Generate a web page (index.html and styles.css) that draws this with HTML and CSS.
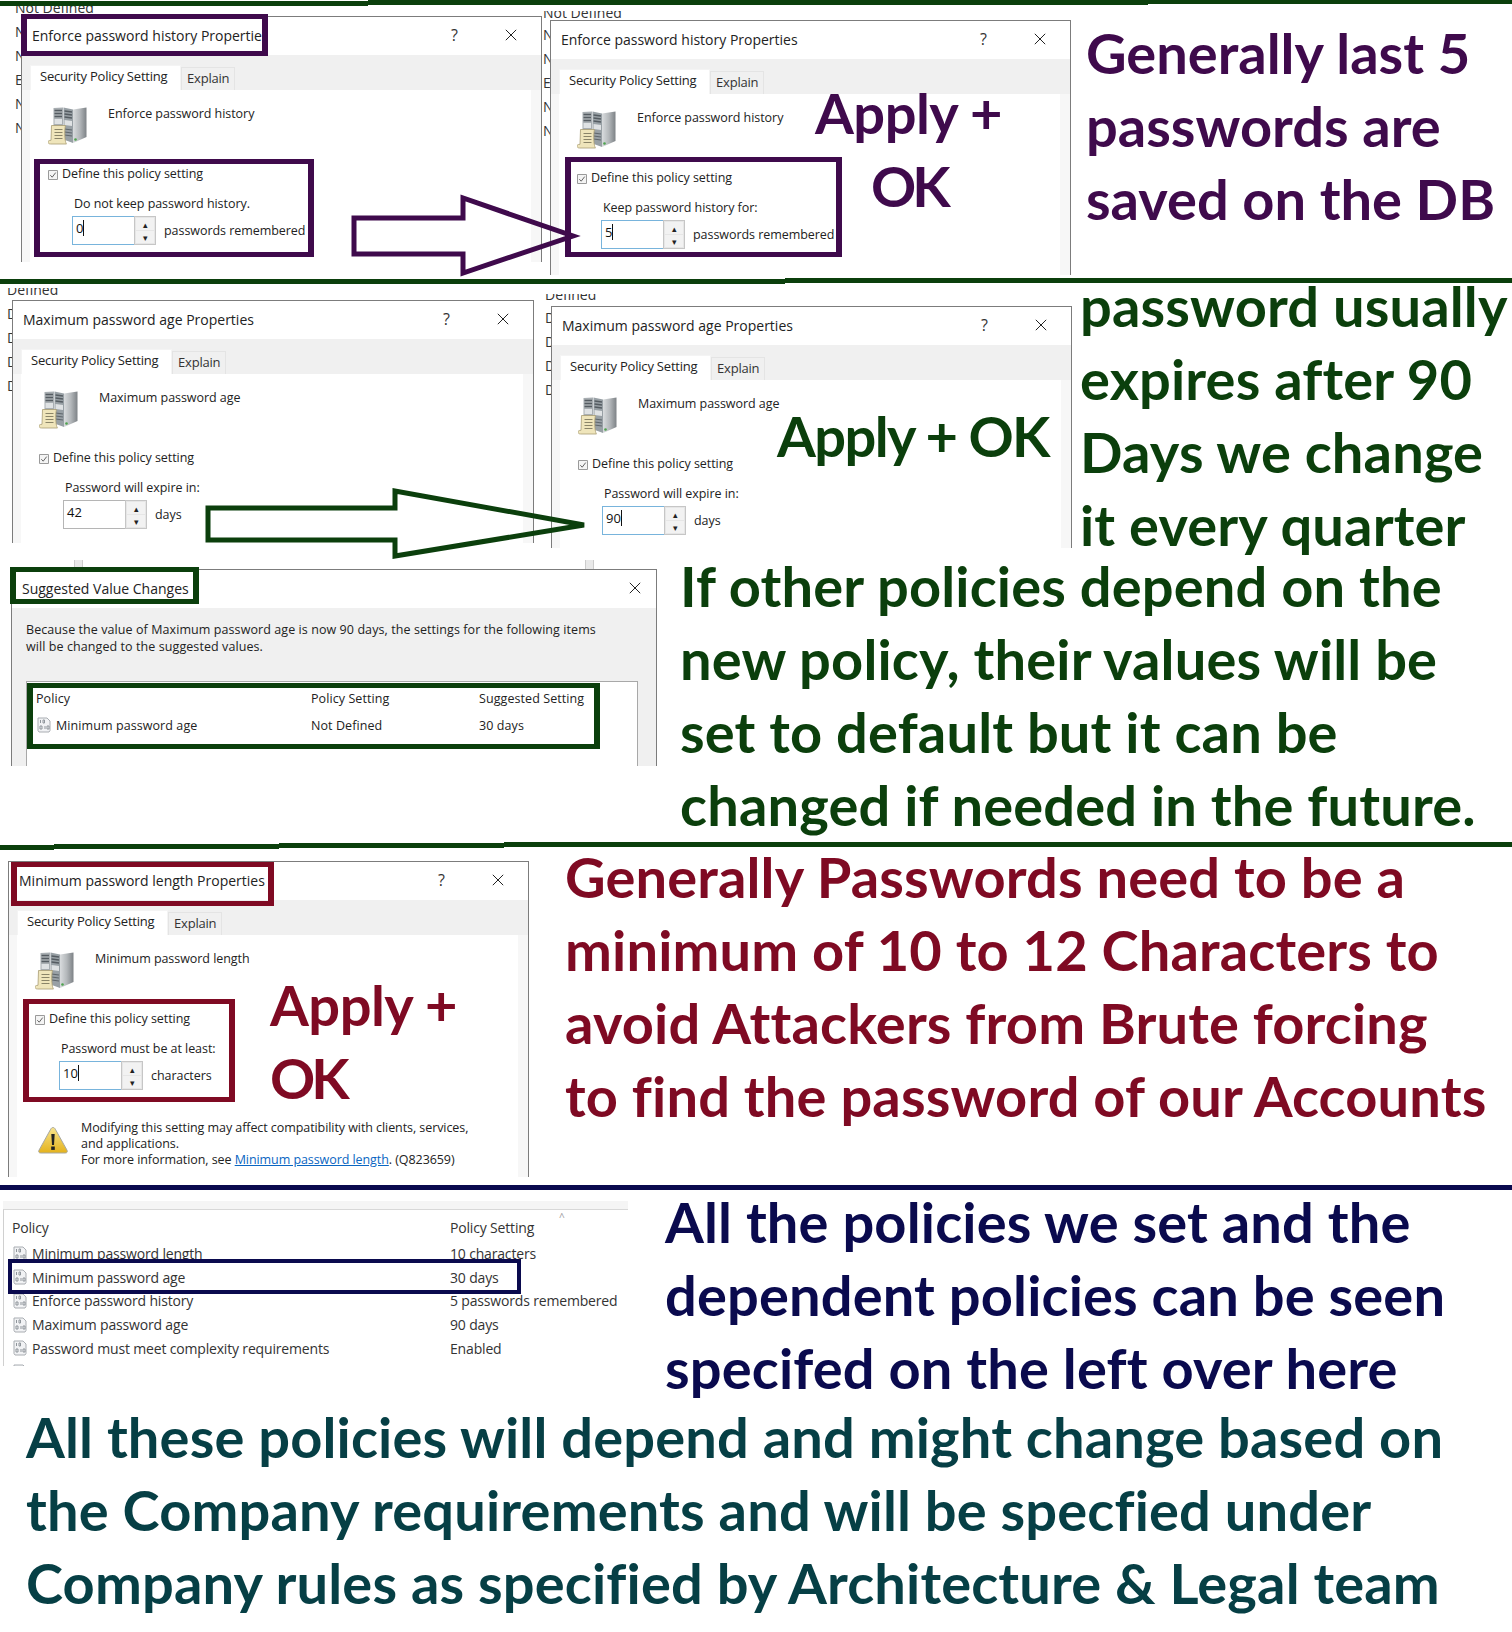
FILE: index.html
```html
<!DOCTYPE html>
<html lang="en">
<head>
<meta charset="utf-8">
<title>Password policy walkthrough</title>
<link rel="stylesheet" href="styles.css">
</head>
<body>
<svg class="defs" width="0" height="0" aria-hidden="true">
  <defs>
    <linearGradient id="srv" x1="0" x2="1" y1="0" y2="0"><stop offset="0" stop-color="#d9dcde"/><stop offset=".5" stop-color="#b4b8bb"/><stop offset="1" stop-color="#7d8286"/></linearGradient>
    <linearGradient id="warn" x1="0" x2="0" y1="0" y2="1"><stop offset="0" stop-color="#f7e38c"/><stop offset="1" stop-color="#e4b21c"/></linearGradient>
    <symbol id="i-server" viewBox="0 0 40 40">
      <path d="M25 3.500L38.500 1.500V31L25 37z" fill="url(#srv)"/>
      <path d="M5.500 2l9.500-.5V33L5.500 31z" fill="#a8aeb2"/>
      <path d="M15.500 1.500L25 3.500V37l-9.500-3.500z" fill="#98a0a5"/>
      <path d="M6.500 4.500h7.500M6.500 7.500h7.500M6.500 10.500h7.500M16.500 5l7.500 1M16.500 8l7.500 1M16.500 11l7.500 1" stroke="#555c62" stroke-width="1.300"/>
      <path d="M6.500 13h7.500v5H6.500zM16.500 14l7.500 1v5l-7.500-1z" fill="#dfe2e4"/>
      <path d="M16.500 23l7.500 1M16.500 26l7.500 1M16.500 29l7.500 1" stroke="#5f666c" stroke-width="1.100"/>
      <circle cx="27.500" cy="33.500" r="1.300" fill="#4da34d"/>
      <path d="M3.500 19.500h14c-1 3-1 12 0 16 .3 1.500 1 2.500 1 2.500H2.500C1 38 0 37.200 0 36c0-1 1-1.700 3-1.700z" fill="#efe5bb" stroke="#a89c72" stroke-width=".8"/>
      <path d="M6.500 23.500h8M6.500 26.500h8M6.500 29.500h8M6.500 32.500h8" stroke="#8a8468" stroke-width="1"/>
    </symbol>
    <symbol id="i-doc" viewBox="0 0 16 16">
      <path d="M2 1h9l3 3v9.500l-1 1.500H3l-1-1.500z" fill="#f1f2f4" stroke="#a9adb2" stroke-width="1"/>
      <path d="M4.500 3v3M7 3h1.500v3H7zM4 9h2v3H4zM9 9v3M11 9h2v3h-2z" fill="none" stroke="#8f959b" stroke-width="1"/>
    </symbol>
    <symbol id="i-warn" viewBox="0 0 30 28">
      <path d="M15 1.500c1 0 1.700.6 2.300 1.700l11.700 21c.8 1.500.1 2.800-1.600 2.800H2.600c-1.700 0-2.400-1.300-1.600-2.800l11.700-21c.6-1.100 1.300-1.700 2.300-1.700z" fill="url(#warn)" stroke="#a8a8a0" stroke-width="1"/>
      <path d="M13.300 8h3.400l-.7 11h-2z" fill="#222"/>
      <rect x="13.200" y="20.500" width="3.600" height="3.400" fill="#222"/>
    </symbol>
    <symbol id="i-x" viewBox="0 0 12 12"><path d="M.8.8l10.400 10.400M11.200.8L.8 11.200" stroke="#222" stroke-width="1" fill="none"/></symbol>
    <symbol id="i-check" viewBox="0 0 10 10"><path d="M.5.500h9v9h-9z" fill="#f4f4f4" stroke="#9a9a9a"/><path d="M2.300 5.200l1.900 2 3.500-4.600" fill="none" stroke="#555" stroke-width=".9"/></symbol>
  </defs>
</svg>

<main class="collage">

  <section class="band band-one">
    <div class="rule rule-one">
      <i class="seg seg-a"></i><i class="seg seg-b"></i><i class="seg seg-c"></i>
    </div>
    <div class="band-grid grid-one">
      <div class="stage">
        <div class="behind behind-a"><p class="clip-word">Not Defined</p><p>N</p><p>N</p><p>E</p><p>N</p><p>N</p></div>
        <div class="behind behind-b"><p class="clip-word">Not Defined</p><p>N</p><p>N</p><p>E</p><p>N</p><p>N</p></div>

        <article class="dialog d1">
          <header class="titlebar"><h2>Enforce password history Properties</h2><span class="help">?</span><svg class="close"><use href="#i-x"/></svg></header>
          <div class="tabs"><span class="tab active">Security Policy Setting</span><span class="tab">Explain</span></div>
          <div class="panel">
            <div class="policy-head"><svg class="srv"><use href="#i-server"/></svg><span>Enforce password history</span></div>
            <label class="define"><svg class="chk"><use href="#i-check"/></svg>Define this policy setting</label>
            <div class="field">
              <p class="field-label">Do not keep password history.</p>
              <div class="spin-row"><div class="spin focus"><b>0</b><em class="caret"></em></div><div class="arrows"><s>▴</s><s>▾</s></div><span>passwords remembered</span></div>
            </div>
          </div>
        </article>

        <article class="dialog d2">
          <header class="titlebar"><h2>Enforce password history Properties</h2><span class="help">?</span><svg class="close"><use href="#i-x"/></svg></header>
          <div class="tabs"><span class="tab active">Security Policy Setting</span><span class="tab">Explain</span></div>
          <div class="panel">
            <div class="policy-head"><svg class="srv"><use href="#i-server"/></svg><span>Enforce password history</span></div>
            <label class="define"><svg class="chk"><use href="#i-check"/></svg>Define this policy setting</label>
            <div class="field">
              <p class="field-label">Keep password history for:</p>
              <div class="spin-row"><div class="spin focus"><b>5</b><em class="caret"></em></div><div class="arrows"><s>▴</s><s>▾</s></div><span>passwords remembered</span></div>
            </div>
          </div>
        </article>

        <i class="mark purple h1a"></i>
        <i class="mark purple h1b"></i>
        <i class="mark purple h1c"></i>
        <svg class="arrow arrow-one" viewBox="0 0 230 80"><path d="M3 23H112V3L222 41 112 78V59H3z"/></svg>
        <strong class="call purple-text call-1a">Apply +</strong>
        <strong class="call call-ok purple-text call-1b">OK</strong>
      </div>
      <div class="note purple-text note-one">Generally last 5<br>passwords are<br>saved on the DB</div>
    </div>
  </section>

  <section class="band band-two">
    <div class="rule rule-two"><i class="seg seg-left"></i><i class="seg seg-right"></i></div>
    <div class="band-grid grid-two">
      <div class="stage">
        <div class="behind behind-c"><p class="clip-word">Defined</p><p>D</p><p>D</p><p>D</p><p>D</p></div>
        <div class="behind behind-d"><p class="clip-word">Defined</p><p>D</p><p>D</p><p>D</p><p>D</p></div>

        <article class="dialog d3">
          <header class="titlebar"><h2>Maximum password age Properties</h2><span class="help">?</span><svg class="close"><use href="#i-x"/></svg></header>
          <div class="tabs"><span class="tab active">Security Policy Setting</span><span class="tab">Explain</span></div>
          <div class="panel">
            <div class="policy-head"><svg class="srv"><use href="#i-server"/></svg><span>Maximum password age</span></div>
            <label class="define"><svg class="chk"><use href="#i-check"/></svg>Define this policy setting</label>
            <div class="field">
              <p class="field-label">Password will expire in:</p>
              <div class="spin-row"><div class="spin"><b>42</b></div><div class="arrows"><s>▴</s><s>▾</s></div><span>days</span></div>
            </div>
          </div>
        </article>

        <article class="dialog d4">
          <header class="titlebar"><h2>Maximum password age Properties</h2><span class="help">?</span><svg class="close"><use href="#i-x"/></svg></header>
          <div class="tabs"><span class="tab active">Security Policy Setting</span><span class="tab">Explain</span></div>
          <div class="panel">
            <div class="policy-head"><svg class="srv"><use href="#i-server"/></svg><span>Maximum password age</span></div>
            <label class="define"><svg class="chk"><use href="#i-check"/></svg>Define this policy setting</label>
            <div class="field">
              <p class="field-label">Password will expire in:</p>
              <div class="spin-row"><div class="spin focus"><b>90</b><em class="caret"></em></div><div class="arrows"><s>▴</s><s>▾</s></div><span>days</span></div>
            </div>
          </div>
        </article>

        <svg class="arrow arrow-two" viewBox="0 0 384 72"><path d="M3 20H190V3L379 37 190 68V52H3z"/></svg>
        <strong class="call green-text call-2a">Apply + OK</strong>

        <div class="sliver sliver-a"></div>
        <div class="sliver sliver-b"></div>

        <article class="dialog d5">
          <header class="titlebar short"><h2>Suggested Value Changes</h2><svg class="close"><use href="#i-x"/></svg></header>
          <div class="suggest-body">
            <p>Because the value of Maximum password age is now 90 days, the settings for the following items<br>will be changed to the suggested values.</p>
            <div class="list-box">
              <div class="sv-row sv-head"><span>Policy</span><span>Policy Setting</span><span>Suggested Setting</span></div>
              <div class="sv-row"><span class="with-icon"><svg class="doc"><use href="#i-doc"/></svg>Minimum password age</span><span>Not Defined</span><span>30 days</span></div>
            </div>
          </div>
        </article>

        <i class="mark green h2a"></i>
        <i class="mark green h2b"></i>
      </div>
      <div class="notes-col">
        <div class="note green-text note-two">password usually<br>expires after 90<br>Days we change<br>it every quarter</div>
        <div class="note green-text note-three">If other policies depend on the<br>new policy, their values will be<br>set to default but it can be<br>changed if needed in the future.</div>
      </div>
    </div>
  </section>

  <section class="band band-three">
    <div class="rule rule-three">
      <i class="seg s3a"></i><i class="seg s3b"></i><i class="seg s3c"></i><i class="seg s3d"></i>
    </div>
    <div class="band-grid grid-three">
      <div class="stage">
        <article class="dialog d6">
          <header class="titlebar"><h2>Minimum password length Properties</h2><span class="help">?</span><svg class="close"><use href="#i-x"/></svg></header>
          <div class="tabs"><span class="tab active">Security Policy Setting</span><span class="tab">Explain</span></div>
          <div class="panel">
            <div class="policy-head"><svg class="srv"><use href="#i-server"/></svg><span>Minimum password length</span></div>
            <label class="define"><svg class="chk"><use href="#i-check"/></svg>Define this policy setting</label>
            <div class="field">
              <p class="field-label">Password must be at least:</p>
              <div class="spin-row"><div class="spin focus"><b>10</b><em class="caret"></em></div><div class="arrows"><s>▴</s><s>▾</s></div><span>characters</span></div>
            </div>
            <div class="warning"><svg class="warn-icon"><use href="#i-warn"/></svg><p>Modifying this setting may affect compatibility with clients, services,<br>and applications.<br>For more information, see <a href="#q">Minimum password length</a>. (Q823659)</p></div>
          </div>
        </article>
        <i class="mark red h3a"></i>
        <i class="mark red h3b"></i>
        <strong class="call red-text call-3a">Apply +</strong>
        <strong class="call call-ok red-text call-3b">OK</strong>
      </div>
      <div class="note red-text note-four">Generally Passwords need to be a<br>minimum of 10 to 12 Characters to<br>avoid Attackers from Brute forcing<br>to find the password of our Accounts</div>
    </div>
  </section>

  <section class="band band-four">
    <div class="rule rule-four"><i class="seg seg-full"></i></div>
    <div class="band-grid grid-four">
      <div class="stage">
        <div class="policy-list">
          <div class="pl-row pl-head"><span>Policy</span><span>Policy Setting</span></div>
          <div class="pl-row"><span class="with-icon"><svg class="doc"><use href="#i-doc"/></svg>Minimum password length</span><span>10 characters</span></div>
          <div class="pl-row"><span class="with-icon"><svg class="doc"><use href="#i-doc"/></svg>Minimum password age</span><span>30 days</span></div>
          <div class="pl-row"><span class="with-icon"><svg class="doc"><use href="#i-doc"/></svg>Enforce password history</span><span>5 passwords remembered</span></div>
          <div class="pl-row"><span class="with-icon"><svg class="doc"><use href="#i-doc"/></svg>Maximum password age</span><span>90 days</span></div>
          <div class="pl-row"><span class="with-icon"><svg class="doc"><use href="#i-doc"/></svg>Password must meet complexity requirements</span><span>Enabled</span></div>
          <div class="pl-row"><span class="with-icon"><svg class="doc"><use href="#i-doc"/></svg></span></div>
          <span class="sort-caret">^</span>
        </div>
        <i class="mark navy h4a"></i>
      </div>
      <div class="note navy-text note-five">All the policies we set and the<br>dependent policies can be seen<br>specifed on the left over here</div>
    </div>
    <div class="note teal-text note-six">All these policies will depend and might change based on<br>the Company requirements and will be specfied under<br>Company rules as specified by Architecture &amp; Legal team</div>
  </section>

</main>
</body>
</html>
```

FILE: styles.css
```css
* { box-sizing: border-box; }
html, body { margin: 0; background: #fff; }
.defs { display: block; height: 0; }
.collage {
  width: 1512px;
  height: 1632px;
  overflow: hidden;
  font-family: "Open Sans", "Liberation Sans", sans-serif;
  color: #1a1a1a;
}

/* bands and rules */
.band-one { height: 278px; }
.band-two { height: 565px; }
.band-three { height: 342px; }
.band-four { height: 447px; }

.rule { display: flex; align-items: flex-start; height: 7px; position: relative; z-index: 5; }
.seg { display: block; height: 5px; background: #0b3f0c; }
.rule-one { margin-bottom: -7px; }
.seg-a { width: 368px; margin-top: 1px; }
.seg-b { width: 780px; }
.seg-c { flex: 1; height: 4px; }
.rule-two { height: 8px; }
.seg-left { width: 785px; margin-top: 1px; }
.seg-right { flex: 1; }
.s3a { width: 54px; margin-top: 2px; }
.s3b { width: 225px; margin-top: 1px; }
.s3c { width: 225px; }
.s3d { flex: 1; margin-top: -1px; }
.seg-full { width: 100%; background: #0a0a4e; }

.band-grid { display: grid; align-items: start; }
.grid-one { grid-template-columns: 1086px 1fr; height: 271px; }
.grid-two { grid-template-columns: 680px 1fr; height: 557px; }
.grid-three { grid-template-columns: 565px 1fr; height: 335px; }
.grid-four { grid-template-columns: 665px 1fr; height: 202px; }

.stage { position: relative; height: 100%; }

/* annotation text */
.note, .call {
  font-family: Lato, "Open Sans", sans-serif;
  font-weight: 700;
  font-size: 56px;
  line-height: 73px;
  font-variant-ligatures: none;
  white-space: nowrap;
}
.note { letter-spacing: .15px; }
.note-one { padding-top: 16px; letter-spacing: 0; }
.note-two { margin: -17px 0 0 400px; }
.note-three { margin-top: -12px; }
.note-four { margin-top: -10px; }
.note-five { margin-top: -7px; }
.note-six { padding: 6px 0 0 26px; }
.purple-text { color: #3f0a4c; }
.green-text { color: #0b3f0c; }
.red-text { color: #7f0a23; }
.navy-text { color: #0a0a4e; }
.teal-text { color: #063f45; }
.call { position: absolute; letter-spacing: -.5px; }
.call-ok { letter-spacing: -4px; }

/* items behind the dialogs */
.behind { position: absolute; font-size: 14px; color: #333; overflow: hidden; }
.behind p { margin: 0; height: 24px; line-height: 24px; white-space: nowrap; }
.behind-a { left: 15px; top: -4px; width: 80px; height: 140px; }
.behind-b { left: 543px; top: 11px; width: 80px; height: 140px; }
.behind-b .clip-word { margin-top: -10px; height: 22px; }
.behind-c { left: 7px; top: 2px; width: 80px; height: 120px; }
.behind-c .clip-word { margin-top: -10px; }
.behind-d { left: 545px; top: 8px; width: 80px; height: 120px; }
.behind-d .clip-word { margin-top: -11px; height: 23px; }

/* dialog */
.dialog {
  position: absolute;
  background: #fff;
  border: 1px solid #7c7c7c;
  border-bottom: 0;
  overflow: hidden;
  font-size: 12.5px;
  letter-spacing: -.05px;
}
.d1 { left: 21px; top: 16px; width: 521px; height: 246px; }
.d2 { left: 550px; top: 20px; width: 521px; height: 255px; }
.d3 { left: 12px; top: 14px; width: 522px; height: 243px; }
.d4 { left: 551px; top: 20px; width: 521px; height: 242px; }
.d5 { left: 11px; top: 283px; width: 646px; height: 197px; }
.d6 { left: 8px; top: 11px; width: 521px; height: 316px; }

.titlebar { display: flex; align-items: center; height: 38px; padding: 0 24px 2px 10px; background: #fff; }
.titlebar h2 { flex: 1; margin: 0; font-size: 14px; font-weight: 400; letter-spacing: 0; color: #222; white-space: nowrap; }
.d1 .titlebar h2 { clip-path: inset(0 188px 0 0); }
.help { width: 54px; font-size: 16px; color: #333; }
.close { width: 12px; height: 12px; }
.tabs { display: flex; align-items: flex-end; height: 35px; padding-left: 8px; background: #f0f0f0; }
.tab { display: flex; align-items: center; height: 23px; padding: 0 5px 2px; background: #f0f0f0; border: 1px solid #e4e4e4; border-bottom: 0; font-size: 13px; letter-spacing: -.2px; color: #333; }
.tab.active { height: 25px; width: 151px; padding: 0 9px 5px; background: #fff; border-color: #f4f4f4; color: #222; white-space: nowrap; }
.panel { margin: 0 10px 0 8px; height: 500px; background: #fff; padding: 16px 0 0 18px; box-shadow: 10px 0 0 #f7f7f7, -8px 0 0 #f7f7f7; }
.policy-head { display: flex; gap: 20px; height: 59px; }
.policy-head span { line-height: 16px; color: #222; }
.srv { width: 40px; height: 40px; flex: none; }
.define { display: flex; align-items: center; gap: 4px; height: 16px; color: #222; }
.chk { width: 10px; height: 10px; margin-top: 3px; }
.field { padding: 15px 0 0 24px; }
.field-label { margin: 0; padding-left: 2px; line-height: 16px; color: #222; }
.spin-row { display: flex; align-items: center; margin-top: 4px; }
.spin { display: flex; align-items: center; width: 62px; height: 29px; padding: 0 0 6px 3px; border: 1px solid #b5b5b5; border-right: 0; color: #111; }
.spin.focus { border-color: #78b4dc; }
.spin b { font-weight: 400; font-size: 13px; }
.caret { display: block; width: 1px; height: 16px; background: #111; }
.arrows { display: flex; flex-direction: column; width: 22px; height: 29px; padding: 1px; background: #e6e6e6; border: 1px solid #c6c6c6; gap: 1px; }
.arrows s { flex: 1; display: flex; align-items: center; justify-content: center; background: #f2f2f2; font-size: 9px; line-height: 1; text-decoration: none; color: #222; }
.spin-row span { margin-left: 8px; color: #222; }

.warning { display: flex; gap: 13px; margin-top: 30px; margin-left: 3px; letter-spacing: -.07px; }
.warn-icon { width: 30px; height: 28px; margin-top: 6px; flex: none; }
.warning p { margin: 0; line-height: 16px; color: #222; }
.warning a { color: #0a66c2; text-decoration: underline; }

/* suggested dialog */
.titlebar.short { padding-right: 15px; }
.suggest-body { height: 200px; background: #f0f0f0; padding: 13px 18px 0 14px; letter-spacing: .08px; }
.suggest-body p { margin: 0; line-height: 17px; color: #222; }
.list-box { height: 120px; margin-top: 26px; background: #fff; border: 1px solid #a8a8a8; padding-left: 9px; }
.sv-row { display: grid; grid-template-columns: 275px 168px 1fr; align-items: center; height: 26px; color: #222; }
.sv-head { margin-top: 3px; height: 27px; }
.with-icon { display: flex; align-items: center; gap: 4px; white-space: nowrap; }
.doc { width: 16px; height: 16px; flex: none; }

.sliver { position: absolute; top: 274px; width: 9px; height: 10px; background: #e9e9e9; border-left: 1px solid #ccc; border-right: 1px solid #ccc; }
.sliver-a { left: 74px; }
.sliver-b { left: 585px; }

/* policy list */
.policy-list {
  position: absolute;
  left: 3px; top: 17px; width: 625px; height: 157px;
  border-top: 1px solid #d8d8d8;
  border-left: 1px solid #d0d0d0;
  box-shadow: 0 -8px 0 #f5f5f5;
  font-size: 14px;
  letter-spacing: -.17px;
  overflow: hidden;
}
.pl-row { display: grid; grid-template-columns: 438px 1fr; align-items: center; height: 23.600px; padding-left: 8px; color: #333; }
.pl-row .with-icon { gap: 4px; }
.pl-head { height: 32px; padding: 3px 0 0 8px; }
.sort-caret { position: absolute; left: 555px; top: 0; font-size: 10px; color: #999; }

/* highlight boxes and arrows */
.mark { position: absolute; display: block; border-style: solid; border-width: 5px 6px; }
.purple { border-color: #3f0a4c; }
.green { border-color: #0b3f0c; }
.red { border-color: #7f0a23; }
.navy { border-color: #0a0a4e; }
.h1a { left: 21px; top: 14px; width: 247px; height: 42px; }
.h1b { left: 34px; top: 159px; width: 280px; height: 98px; }
.h1c { left: 565px; top: 157px; width: 277px; height: 100px; }
.h2a { left: 10px; top: 281px; width: 189px; height: 37px; }
.h2b { left: 27px; top: 397px; width: 573px; height: 66px; }
.h3a { left: 11px; top: 12px; width: 263px; height: 44px; }
.h3b { left: 23px; top: 149px; width: 212px; height: 103px; }
.h4a { left: 8px; top: 67px; width: 513px; height: 35px; border-width: 4px; }

.arrow { position: absolute; fill: none; stroke-width: 5px; overflow: visible; }
.arrow-one { left: 351px; top: 195px; width: 230px; height: 80px; stroke: #3f0a4c; }
.arrow-two { left: 205px; top: 202px; width: 384px; height: 72px; stroke: #0b3f0c; }

.call-1a { left: 815px; top: 76px; }
.call-1b { left: 871px; top: 149px; }
.call-2a { left: 777px; top: 113px; letter-spacing: -1.600px; }
.call-3a { left: 270px; top: 118px; }
.call-3b { left: 270px; top: 191px; }
```
